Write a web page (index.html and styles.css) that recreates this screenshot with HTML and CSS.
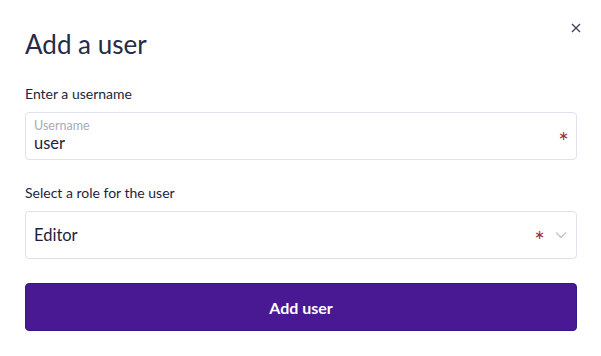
FILE: index.html
```html
<!DOCTYPE html>
<html lang="en">
<head>
<meta charset="utf-8">
<link rel="stylesheet" href="styles.css">
</head>
<body>
<div class="dialog">
  <button class="close" aria-label="Close">
    <svg width="10" height="10" viewBox="0 0 10 10"><path d="M1 1L9 9M9 1L1 9" stroke="#3d4257" stroke-width="1.3" fill="none"/></svg>
  </button>
  <h1 class="title">Add a user</h1>
  <div class="field">
    <label class="label">Enter a username</label>
    <div class="input">
      <div class="input-text">
        <span class="float">Username</span>
        <span class="value">user</span>
      </div>
      <span class="req">*</span>
    </div>
  </div>
  <div class="field">
    <label class="label">Select a role for the user</label>
    <div class="input select">
      <div class="input-text"><span class="value">Editor</span></div>
      <span class="req">*</span>
      <svg class="chev" width="12" height="8" viewBox="0 0 12 8"><path d="M1 1.5L6 6.5L11 1.5" stroke="#c3c5cf" stroke-width="1.4" fill="none"/></svg>
    </div>
  </div>
  <button class="submit">Add user</button>
</div>
</body>
</html>
```
FILE: styles.css
```css
html, body { margin: 0; padding: 0; background: #fff; }
body { font-family: Lato, "Open Sans", sans-serif; color: #1c1f3e; }
.dialog { position: relative; padding: 28px 24px 0 25px; width: 552px; }
.close { position: absolute; top: 22px; right: 19px; background: none; border: 0; padding: 0; width: 12px; height: 12px; display: flex; align-items: center; justify-content: center; }
.title { margin: 0; font-size: 26px; font-weight: 400; line-height: 32px; color: #262a47; }
.field { margin-top: 25px; }
.field + .field { margin-top: 24px; }
.label { display: block; font-size: 14px; line-height: 18px; color: #1c1f3e; margin-bottom: 9px; }
.input { box-sizing: border-box; height: 48px; border: 1px solid #dfe1ed; border-radius: 4px; display: flex; align-items: center; padding: 0 7px 0 8px; }
.input-text { flex: 1; display: flex; flex-direction: column; }
.float { font-size: 12.5px; line-height: 14px; color: #a9abb7; }
.value { font-size: 16.5px; line-height: 20px; color: #1c1f3e; }
.req { color: #a5263b; font-size: 25px; line-height: 25px; height: 16px; margin-top: 2px; }
.select .req { margin-right: 10px; }
.chev { margin-right: 2px; }
.submit { display: block; box-sizing: border-box; width: 552px; height: 48px; margin-top: 24px; background: #491893; border: 1px solid #2e1a8a; border-radius: 4px; color: #fff; font-family: Lato, "Open Sans", sans-serif; font-size: 16px; font-weight: 700; }
```
